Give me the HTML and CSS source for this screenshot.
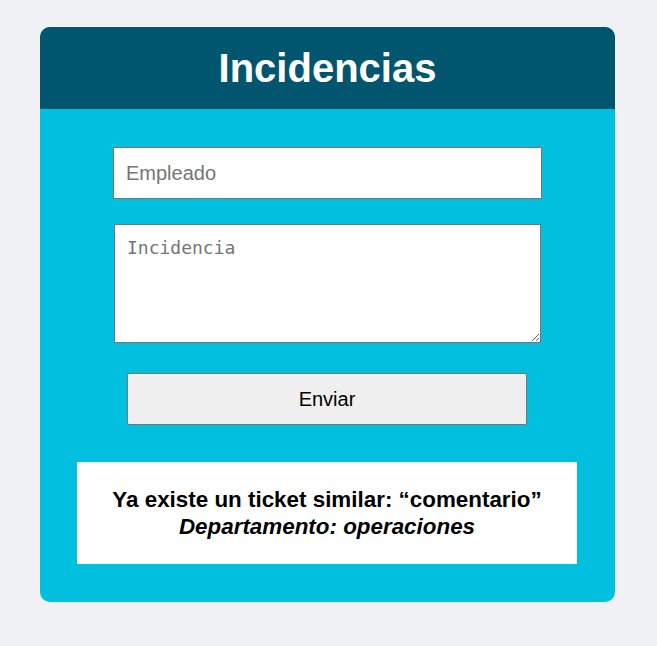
FILE: index.html
```html
<!DOCTYPE html>
<html lang="es">
<head>
<meta charset="utf-8">
<title>Incidencias</title>
<link rel="stylesheet" href="styles.css">
</head>
<body>
<div class="card">
  <div class="card-header"><h1 class="title">Incidencias</h1></div>
  <div class="card-body">
    <input class="field" type="text" placeholder="Empleado">
    <textarea class="area" placeholder="Incidencia"></textarea>
    <button class="btn" type="button">Enviar</button>
    <div class="message">
      <p class="msg-line">Ya existe un ticket similar: “comentario”</p>
      <p class="msg-line msg-dept">Departamento: operaciones</p>
    </div>
  </div>
</div>
</body>
</html>
```
FILE: styles.css
```css
html, body {
  margin: 0;
  padding: 0;
  background: #f0f1f5;
  font-family: "Liberation Sans", Arial, sans-serif;
}
body {
  padding: 27px 0 0 40px;
}
.card {
  width: 575px;
  border-radius: 10px;
  overflow: hidden;
  background: #00bfdf;
}
.card-header {
  background: #01566f;
  height: 82px;
  display: flex;
  align-items: center;
  justify-content: center;
}
.title {
  margin: 0;
  color: #ffffff;
  font-size: 40px;
  font-weight: bold;
  line-height: 1;
}
.card-body {
  display: flex;
  flex-direction: column;
  align-items: center;
  padding: 38px 0 38px;
}
.field {
  box-sizing: border-box;
  width: 429px;
  height: 52px;
  margin: 0;
  padding: 0 12px;
  border: 1px solid #767676;
  border-radius: 0;
  background: #fff;
  font-family: "Liberation Sans", Arial, sans-serif;
  font-size: 20px;
  color: #000;
}
.field::placeholder { color: #757575; }
.area {
  box-sizing: border-box;
  width: 427px;
  height: 119px;
  margin: 25px 0 0;
  padding: 12px 12px;
  border: 1px solid #767676;
  border-radius: 0;
  background: #fff;
  font-family: "DejaVu Sans Mono", monospace;
  font-size: 18px;
  display: block;
}
.area::placeholder { color: #757575; }
.btn {
  box-sizing: border-box;
  width: 400px;
  height: 52px;
  margin: 30px 1px 0 0;
  border: 1px solid #767676;
  border-radius: 2px;
  background: #efefef;
  font-family: "Liberation Sans", Arial, sans-serif;
  font-size: 20px;
  color: #000;
}
.message {
  box-sizing: border-box;
  width: 500px;
  height: 102px;
  margin: 37px 1px 0 0;
  background: #fff;
  display: flex;
  flex-direction: column;
  justify-content: center;
  align-items: center;
}
.msg-line {
  margin: 0;
  font-size: 22.4px;
  font-weight: bold;
  line-height: 27px;
  color: #000;
}
.msg-dept {
  font-style: italic;
}
```
